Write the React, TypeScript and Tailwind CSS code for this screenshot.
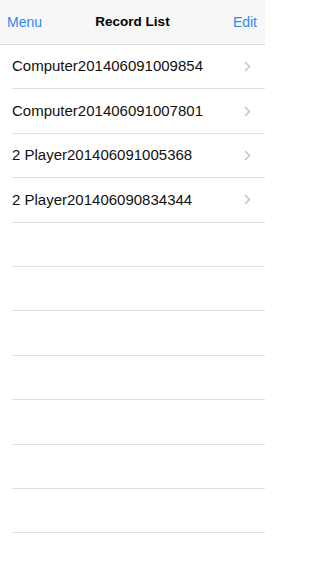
import React from "react";

const records = [
  "Computer201406091009854",
  "Computer201406091007801",
  "2 Player201406091005368",
  "2 Player201406090834344",
];

function Chevron() {
  return (
    <svg width="7" height="11" viewBox="0 0 7 11" className="shrink-0">
      <path d="M1 1l4.5 4.5L1 10" fill="none" stroke="#c7c7cc" strokeWidth="1.6" />
    </svg>
  );
}

export default function App() {
  const empty = Array.from({ length: 8 });
  return (
    <div
      className="w-[265px] h-[574px] bg-white overflow-hidden"
      style={{ fontFamily: '"Liberation Sans", Arial, sans-serif' }}
    >
      <div className="h-[45px] bg-[#f7f7f7] border-b border-[#d8d8d8] grid grid-cols-[1fr_auto_1fr] items-center px-[7px]">
        <span className="text-[14px] text-[#2f87f5] justify-self-start">Menu</span>
        <span className="text-[13.5px] font-bold text-black">Record List</span>
        <span className="text-[14px] text-[#2f87f5] justify-self-end mr-[1px]">Edit</span>
      </div>
      <div className="flex flex-col">
        {records.map((r) => (
          <div key={r} className="h-[44.4px] pl-[12px] flex">
            <div className="flex-1 flex items-center justify-between pr-[14px] border-b border-[#e0e0e0]">
              <span className="text-[15px] text-[#111]">{r}</span>
              <Chevron />
            </div>
          </div>
        ))}
        {empty.map((_, i) => (
          <div key={i} className="h-[44.4px] pl-[12px] flex">
            <div className="flex-1 border-b border-[#e0e0e0]" />
          </div>
        ))}
      </div>
    </div>
  );
}
